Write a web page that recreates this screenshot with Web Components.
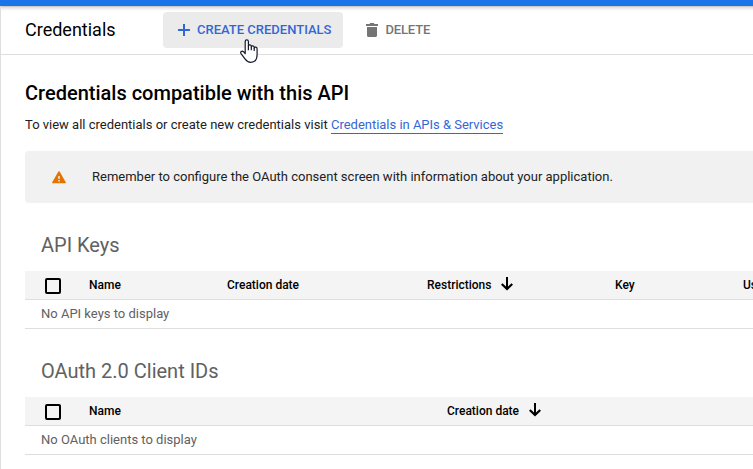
<!DOCTYPE html>
<html lang="en">
<head>
<meta charset="utf-8">
<title>Credentials</title>
<style>
  html, body { margin: 0; height: 100%; overflow: hidden; background: #fff; }
  body { font: 400 13px/20px Roboto, "Liberation Sans", sans-serif; color: #212121; }
</style>
</head>
<body>
<credentials-page></credentials-page>
<script>
const define = (name, html) => customElements.define(name, class extends HTMLElement {
  constructor() {
    super();
    this.attachShadow({ mode: 'open' }).innerHTML = html;
  }
});

const icons = {
  add: ['0 0 12 12', 12, 12, '<path d="M5 0h2v5h5v2H7v5H5V7H0V5h5z"/>'],
  trash: ['0 0 12 14', 12, 14, '<path d="M0 1h3.500L4.200 0h3.600l.7 1H12v2H0zM1 4h10v8.500c0 .8-.7 1.500-1.500 1.500h-7C1.700 14 1 13.300 1 12.500z"/>'],
  warning: ['0 0 14 13', 14, 13, '<path fill-rule="evenodd" d="M6.400.500Q7-.200 7.600.500L13.900 11.500Q14 12.300 13.300 12.300H.7Q0 12.300.1 11.500zM6.300 5h1.400v2.900H6.300zm0 4h1.400v1.400H6.300z"/>'],
  down: ['0 0 12 14', 12, 14, '<path d="M5 0h2v9.600l3.500-3.300L12 7.700 6 13.600 0 7.700l1.500-1.400L5 9.600z"/>'],
  hand: ['0 0 18 24', 18, 24, '<path fill="#fff" stroke="#17172b" stroke-width="1.200" stroke-linejoin="round" d="M5.200 14.700V2.500C5.200.300 8.400.300 8.400 2.500V7C8.700 5.300 11.300 5.700 11.300 7.500V8C11.600 6.300 14.200 6.700 14.200 8.500V9C14.600 7.500 17.100 7.800 17.100 9.800V15.500C17.100 20.500 14.900 23.300 10.700 23.300C7.800 23.300 6.700 22.300 5.200 20.100L1.200 14.800C-.2 12.800 1.900 11.200 3.500 12.700z"/><path fill="none" stroke="#17172b" stroke-width="1.200" d="M8.400 7v4.300M11.300 8v3.300M14.200 9v3"/>']
};
customElements.define('g-icon', class extends HTMLElement {
  connectedCallback() {
    const [box, w, h, body] = icons[this.getAttribute('name')];
    if (!this.shadowRoot) this.attachShadow({ mode: 'open' });
    this.shadowRoot.innerHTML = `<style>:host{display:block;flex:none;width:${w}px;height:${h}px}svg{display:block}</style>
      <svg width="${w}" height="${h}" viewBox="${box}" fill="currentColor" aria-hidden="true">${body}</svg>`;
  }
});

define('tool-button', `<style>
  :host { display: flex; align-items: center; box-sizing: border-box; height: 36px; padding: 0 12px 0 15px;
    border-radius: 4px; color: #757575; font-weight: 500; white-space: nowrap; position: relative; }
  :host([primary]) { background: #ebebeb; color: #3367d6; }
  :host(:not([primary])) { padding-left: 23px; letter-spacing: -.15px; }
  slot[name=icon]::slotted(*) { margin-right: 7px; }
  slot[name=pointer]::slotted(*) { position: absolute; left: 77px; top: 27px; }
</style><slot name="icon"></slot><slot></slot><slot name="pointer"></slot>`);

define('top-bar', `<style>
  :host { display: block; border-top: 6px solid #1a73e8; }
  .bar { display: flex; align-items: center; box-sizing: border-box; height: 49px; padding: 0 0 1px 24px;
    border-left: 1px solid #dedede; border-bottom: 1px solid #dedede; background: linear-gradient(#b5b5b5, #dedede 1px, #f0f0f0 3px, #fff 5px); }
  .title { width: 138px; font-size: 18px; line-height: 24px; color: #000; }
</style><div class="bar"><div class="title"><slot name="title"></slot></div><slot></slot></div>`);

define('info-banner', `<style>
  :host { display: flex; align-items: center; height: 52px; padding-left: 27px; background: #f1f1f1;
    border-radius: 4px 0 0 4px; white-space: nowrap; }
  g-icon { color: #e37400; margin-right: 26px; }
</style><g-icon name="warning"></g-icon><span><slot></slot></span>`);

define('check-box', `<style>
  :host { display: block; box-sizing: border-box; width: 16px; height: 16px; border: 2px solid #000; border-radius: 2px; margin-top: 2px; }
</style>`);

define('column-head', `<style>
  :host { display: flex; align-items: center; white-space: nowrap; }
  g-icon { display: none; margin: -2px 0 0 10px; }
  :host([sorted]) g-icon { display: block; }
</style><slot></slot><g-icon name="down"></g-icon>`);

define('data-section', `<style>
  :host { display: block; height: 126px; }
  h2 { margin: 0; padding: 0 16px; height: 40px; font: 400 20px/28px Roboto, sans-serif; color: #616161; box-sizing: border-box; white-space: nowrap; }
  .head { display: grid; grid-template-columns: var(--cols); align-items: center; height: 28px; padding-left: 20px;
    background: #f4f4f4; border-bottom: 1px solid #dedede; font-size: 12px; font-weight: 500; color: #000; overflow: hidden; }
  .empty { height: 28px; line-height: 28px; padding-left: 16px; border-bottom: 1px solid #dedede; color: #616161; }
</style>
<h2><slot name="title"></slot></h2>
<div class="head"><check-box></check-box><slot></slot></div>
<div class="empty"><slot name="empty"></slot></div>`);

define('credentials-page', `<style>
  :host { display: block; height: 469px; overflow: hidden; }
  .frame { border-left: 1px solid #dedede; }
  main { padding: 26px 0 0 24px; }
  h1 { margin: 0; font: 500 20px/24px Roboto, sans-serif; color: #000; }
  p { margin: 10px 0 16px; white-space: nowrap; }
  a { display: inline-block; line-height: 17px; color: #3367d6; border-bottom: 1px solid #3367d6; text-decoration: none; letter-spacing: -.02px; }
  info-banner { margin-bottom: 28px; }
  .keys { --cols: 44px 138px 200px 188px 128px 80px; }
  .clients { --cols: 44px 358px 200px; }
</style>
<top-bar>
  <span slot="title">Credentials</span>
  <tool-button primary><g-icon slot="icon" name="add"></g-icon><span>CREATE CREDENTIALS</span><g-icon slot="pointer" name="hand"></g-icon></tool-button>
  <tool-button><g-icon slot="icon" name="trash"></g-icon><span>DELETE</span></tool-button>
</top-bar>
<div class="frame"><main>
  <h1>Credentials compatible with this API</h1>
  <p><span>To view all credentials or create new credentials visit </span><a>Credentials in APIs &amp; Services</a></p>
  <info-banner>Remember to configure the OAuth consent screen with information about your application.</info-banner>
  <data-section class="keys">
    <span slot="title">API Keys</span>
    <column-head>Name</column-head><column-head>Creation date</column-head><column-head sorted>Restrictions</column-head><column-head>Key</column-head><column-head>Usage</column-head>
    <span slot="empty">No API keys to display</span>
  </data-section>
  <data-section class="clients">
    <span slot="title">OAuth 2.0 Client IDs</span>
    <column-head>Name</column-head><column-head sorted>Creation date</column-head>
    <span slot="empty">No OAuth clients to display</span>
  </data-section>
</main></div>`);
</script>
</body>
</html>
